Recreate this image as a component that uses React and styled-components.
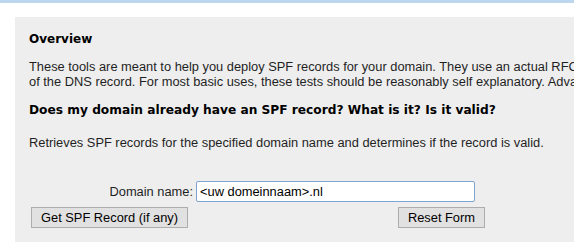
import React from "react";
import styled, { createGlobalStyle } from "styled-components";

const GlobalStyle = createGlobalStyle`
  html, body {
    margin: 0;
    padding: 0;
    background: #fff;
    overflow: hidden;
    font-family: "Liberation Sans", Arial, sans-serif;
  }
`

const TopBar = styled.div`
  height: 3px;
  background: #bdd7ee;
`

const Page = styled.div`
  padding: 14px 0 0 15px;
`

const Panel = styled.section`
  background: #eeeeee;
  width: 900px;
  padding: 14px 14px 20px;
  box-sizing: border-box;
  color: #1f1f1f;
`

const Title = styled.h3`
  margin: 0;
  font-family: "DejaVu Sans", Verdana, sans-serif;
  font-size: 12px;
  line-height: 16px;
  font-weight: bold;
  color: #000;
`

const Question = styled.h2`
  margin: 12px 0 0;
  font-family: "DejaVu Sans", Verdana, sans-serif;
  font-size: 12.2px;
  line-height: 18px;
  font-weight: bold;
  color: #000;
`

const Text = styled.p`
  margin: ${p => p.$top || 0}px 0 0;
  font-size: 12.85px;
  line-height: 15px;
  white-space: nowrap;
`

const Form = styled.form`
  margin-top: 31px;
  display: grid;
  grid-template-columns: 164px 289px;
  column-gap: 3px;
  row-gap: 5px;
  align-items: center;
`

const Label = styled.label`
  font-size: 12.85px;
  text-align: right;
  color: #1f1f1f;
`

const Input = styled.input`
  width: 279px;
  height: 21px;
  box-sizing: border-box;
  border: 1px solid #7ea4d3;
  border-radius: 2px;
  padding: 0 3px;
  font-family: "Liberation Sans", Arial, sans-serif;
  font-size: 12.85px;
  color: #000;
  background: #fff;
  outline: none;
`

const Button = styled.button`
  justify-self: ${p => (p.$end ? "end" : "start")};
  margin-left: ${p => (p.$end ? 0 : 2)}px;
  height: 21px;
  padding: 0 9px;
  box-sizing: border-box;
  border: 1px solid #adadad;
  border-radius: 0;
  background: #e1e1e1;
  font-family: "Liberation Sans", Arial, sans-serif;
  font-size: 12.85px;
  color: #000;
`

export default function App() {
  return (
    <>
      <GlobalStyle />
      <TopBar />
      <Page>
        <Panel>
          <Title>Overview</Title>
          <Text $top={12}>
            These tools are meant to help you deploy SPF records for your domain. They use an actual RFC 7208 compliant library (pyspf) for tests and detailed results
            <br />
            of the DNS record. For most basic uses, these tests should be reasonably self explanatory. Advanced users can see how their record is parsed.
          </Text>
          <Question>Does my domain already have an SPF record? What is it? Is it valid?</Question>
          <Text $top={16}>
            Retrieves SPF records for the specified domain name and determines if the record is valid.
          </Text>
          <Form onSubmit={e => e.preventDefault()}>
            <Label htmlFor="domain">Domain name:</Label>
            <Input id="domain" defaultValue="<uw domeinnaam>.nl" />
            <Button type="submit">Get SPF Record (if any)</Button>
            <Button type="reset" $end>Reset Form</Button>
          </Form>
        </Panel>
      </Page>
    </>
  );
}
